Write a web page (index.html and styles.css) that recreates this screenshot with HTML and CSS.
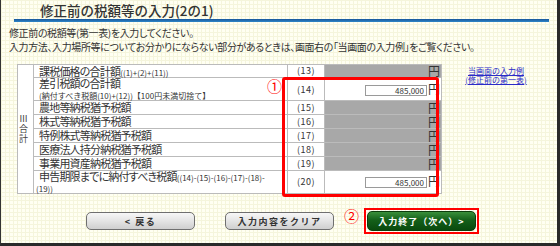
FILE: index.html
```html
<!DOCTYPE html>
<html lang="ja">
  <head>
    <meta charset="UTF-8" />
    <title>修正前の税額等の入力</title>
    <link rel="stylesheet" href="styles.css">
  </head>
  <body>
    <div class="screen">
      <h1 class="title">修正前の税額等の入力(2の1)</h1>
      <div class="rule"></div>
      <p class="lead">
        修正前の税額等(第一表)を入力してください。<br />
        入力方法、入力場所等についてお分かりにならない部分があるときは、画面右の「当画面の入力例」をご覧ください。
      </p>

      <div class="main">
        <div class="table-wrap">
          <table class="tax">
            <tr class="r13">
              <td class="sec" rowspan="8">Ⅲ<br />合<br />計</td>
              <td class="label">課税価格の合計額<small>((1)+(2)+(11))</small></td>
              <td class="num">(13)</td>
              <td class="amt off">円</td>
            </tr>
            <tr class="r14">
              <td class="label">差引税額の合計額<br /><small class="note">(納付すべき税額(10)+(12))【100円未満切捨て】</small></td>
              <td class="num">(14)</td>
              <td class="amt"><input class="yen" type="text" value="485,000" />円</td>
            </tr>
            <tr>
              <td class="label">農地等納税猶予税額</td>
              <td class="num">(15)</td>
              <td class="amt off">円</td>
            </tr>
            <tr>
              <td class="label">株式等納税猶予税額</td>
              <td class="num">(16)</td>
              <td class="amt off">円</td>
            </tr>
            <tr>
              <td class="label">特例株式等納税猶予税額</td>
              <td class="num">(17)</td>
              <td class="amt off">円</td>
            </tr>
            <tr>
              <td class="label">医療法人持分納税猶予税額</td>
              <td class="num">(18)</td>
              <td class="amt off">円</td>
            </tr>
            <tr>
              <td class="label">事業用資産納税猶予税額</td>
              <td class="num">(19)</td>
              <td class="amt off">円</td>
            </tr>
            <tr class="r20">
              <td class="label wrap">申告期限までに納付すべき税額<small>((14)-(15)-(16)-(17)-(18)-<br />(19))</small></td>
              <td class="num">(20)</td>
              <td class="amt"><input class="yen" type="text" value="485,000" />円</td>
            </tr>
          </table>
          <span class="mark mark1">①</span>
          <div class="hl"></div>
        </div>
        <div class="aside">
          <a href="#">当画面の入力例<br />(修正前の第一表)</a>
        </div>
      </div>

      <div class="buttons">
        <button class="btn">&lt; 戻る</button>
        <button class="btn">入力内容をクリア</button>
        <span class="next-wrap">
          <span class="mark mark2">②</span>
          <button class="btn next">入力終了（次へ）&gt;</button>
        </span>
      </div>
    </div>
  </body>
</html>
```

FILE: styles.css
```css
body {
  margin: 0;
  font-family: "Noto Sans CJK JP", "Noto Sans", sans-serif;
  color: #333;
}

.screen {
  width: 560px;
  height: 246px;
  box-sizing: border-box;
  border-left: 1px solid #333;
  border-right: 3px solid #2a2a2a;
  border-bottom: 3px solid #2a2a2a;
  background-color: #fffff2;
  background-image: linear-gradient(90deg, #f5f5dc 1px, transparent 1px),
    linear-gradient(#f5f5dc 1px, transparent 1px);
  background-size: 4px 4px;
}

.title {
  margin: 0;
  padding: 2px 0 0 39px;
  font-size: 13.5px;
  line-height: 16px;
  font-weight: 500;
  color: #333;
}

.rule {
  height: 3px;
  margin: 1px 8px 0 13px;
  background: linear-gradient(#17569a, #2f87c9);
}

.lead {
  margin: 4px 0 0 8px;
  font-size: 10px;
  line-height: 14px;
  letter-spacing: -0.38px;
  font-feature-settings: "palt";
}

.main {
  display: flex;
  margin-top: 10px;
}

.table-wrap {
  position: relative;
  margin-left: 16px;
}

.tax {
  border-collapse: collapse;
  background: #fff;
  font-size: 10px;
}

.tax td {
  border: 1px solid #bbb;
  padding: 0;
  height: 13px;
  line-height: 13px;
}

.tax .r13 td {
  height: 12px;
  line-height: 12px;
}

.tax .r14 td {
  height: 22px;
  line-height: 11px;
}

.tax .r20 td {
  height: 18px;
  line-height: 10px;
}

.sec {
  width: 14px;
  padding-left: 1px !important;
  font-size: 9px;
  line-height: 10px !important;
  vertical-align: middle;
  color: #444;
}

.label {
  width: 248px;
  padding-left: 5px !important;
  font-size: 11px;
  letter-spacing: -0.8px;
  font-feature-settings: "palt";
  white-space: nowrap;
}

.label small {
  font-size: 8px;
  line-height: 8px;
  letter-spacing: 0;
  font-feature-settings: normal;
}

.label.wrap {
  padding-left: 2px !important;
  text-indent: 3px;
}

.num {
  width: 36px;
  text-align: center;
  font-size: 9px;
  letter-spacing: 0.5px;
}

.amt {
  width: 115px;
  text-align: right;
  font-size: 12px;
  padding-right: 1px !important;
}

.amt.off {
  background: #a8a8a8;
}

.yen {
  width: 62px;
  height: 11px;
  box-sizing: border-box;
  margin: 0 1px 0 0;
  padding: 0 2px;
  border: 1px solid #9a9a9a;
  font-family: inherit;
  font-size: 8px;
  line-height: 9px;
  text-align: right;
  color: #333;
  vertical-align: 0;
}

.hl {
  position: absolute;
  left: 265px;
  top: 13px;
  width: 157px;
  height: 120px;
  box-sizing: border-box;
  border: 3px solid #f00;
  border-radius: 3px;
}

.mark {
  position: absolute;
  color: #f00;
  font-size: 15px;
  line-height: 14px;
}

.mark1 {
  left: 250px;
  top: 15px;
}

.aside {
  width: 100px;
  margin-left: 4px;
  text-align: center;
}

.aside a {
  display: inline-block;
  margin-top: -2px;
  font-size: 8px;
  line-height: 9px;
  color: #2b2bc8;
}

.buttons {
  display: flex;
  align-items: center;
  gap: 30px;
  margin-top: 14px;
  padding-left: 85px;
}

.btn {
  width: 109px;
  height: 18px;
  padding: 0;
  border: 1px solid #6f6f6f;
  border-radius: 5px;
  background: linear-gradient(#f7f7f7, #e4e4e4 50%, #cfcfcf);
  font-family: inherit;
  font-size: 9px;
  font-weight: bold;
  letter-spacing: 1.5px;
  color: #333;
}

.next-wrap {
  position: relative;
  display: inline-flex;
  padding: 1px;
  border: 2px solid #f00;
}

.next {
  height: 20px;
  border-color: #0c3d0c;
  background: linear-gradient(#3a8f3a, #14601a 45%, #0a4a0e);
  color: #fff;
  letter-spacing: 1px;
}

.mark2 {
  left: -22px;
  top: -1px;
}
```
